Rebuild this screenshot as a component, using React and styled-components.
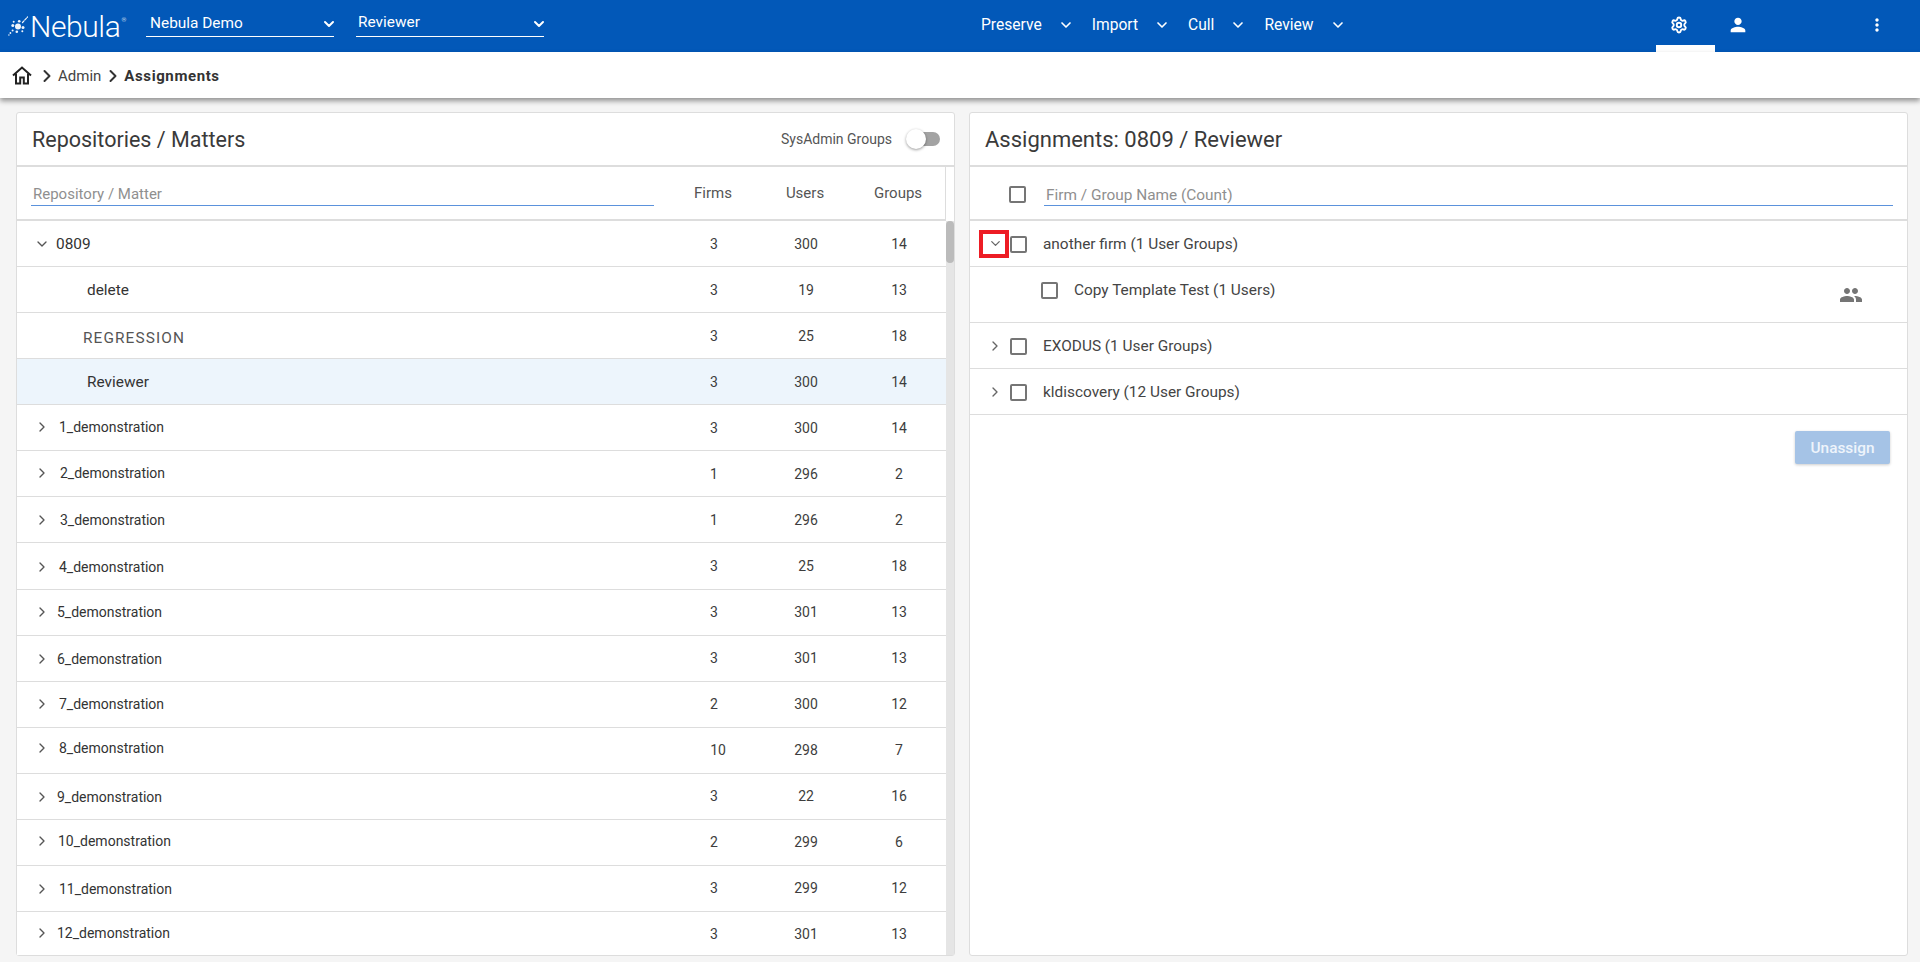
import React from 'react';
import styled, { createGlobalStyle } from 'styled-components';
import { FiChevronDown, FiChevronRight } from 'react-icons/fi';
import { MdPerson, MdPeople, MdMoreVert } from 'react-icons/md';
import { Settings } from 'lucide-react';

const GlobalStyle = createGlobalStyle`
html, body {
  margin: 0;
  padding: 0;
  height: 100%;
  background: #f5f5f5;
  overflow: hidden;
  font-family: Roboto, "Liberation Sans", sans-serif;
}
* { box-sizing: border-box; }
`

const Page = styled.div`
height: 962px;
display: flex;
flex-direction: column;
`

const TopBar = styled.header`
height: 52px;
flex: none;
background: #0258b8;
color: #fff;
display: flex;
align-items: center;
font-size: 15.4px;
padding-left: 8px;
`

const Logo = styled.div`
width: 138px;
flex: none;
display: flex;
align-items: center;
font-size: 30px;
font-weight: 300;
letter-spacing: -0.4px;
svg { margin-right: 2px; flex: none; }
sup { font-size: 6px; margin: -14px 0 0 1px; }
`

const Select = styled.div`
width: 188px;
flex: none;
margin-right: 22px;
align-self: flex-start;
margin-top: 10px;
height: 27px;
border-bottom: 1px solid #fff;
display: flex;
align-items: center;
justify-content: space-between;
padding: 0 0 ${p => p.lift}px ${p => p.inset}px;
svg { flex: none; margin: ${p => p.lift + 2}px -3px 0 0; }
`

const Nav = styled.nav`
display: flex;
flex: none;
margin-left: 415px;
padding-bottom: 2px;
font-size: 15.6px;
`

const NavItem = styled.div`
display: flex;
align-items: center;
gap: 16px;
margin-right: 18px;
`

const TabIcon = styled.div`
width: 59px;
height: 52px;
flex: none;
display: flex;
align-items: center;
justify-content: center;
margin-left: ${p => p.offset || 0}px;
border-bottom: 7px solid ${p => (p.active ? '#fff' : 'transparent')};
padding: 5px 12px 0 0;
`

const Crumbs = styled.div`
height: 46px;
flex: none;
background: #fff;
box-shadow: 0 3px 5px rgba(0, 0, 0, 0.4);
display: flex;
align-items: center;
padding: 2px 0 0 12px;
font-size: 15px;
color: #444;
position: relative;
`

const HomeIcon = styled.svg`
width: 20px;
height: 20px;
margin: -2px 3px 0 0;
`

const CrumbSep = styled.span`
display: flex;
margin: 0 1px 0 2px;
color: #333;
`

const Current = styled.b`
font-weight: 700;
letter-spacing: 0.6px;
color: #333;
`

const Main = styled.main`
flex: 1;
display: flex;
gap: 14px;
padding: 14px 12px 6px 16px;
min-height: 0;
`

const Panel = styled.section`
flex: 1;
min-width: 0;
background: #fff;
border: 1px solid #ddd;
border-radius: 3px;
display: flex;
flex-direction: column;
`

const PanelHead = styled.div`
height: 54px;
flex: none;
border-bottom: 2px solid #ddd;
display: flex;
align-items: center;
justify-content: space-between;
padding: 0 14px 0 15px;
`

const Title = styled.h2`
margin: 0;
font-size: ${p => p.size}px;
font-weight: 400;
color: #3a3a3a;
`

const ToggleWrap = styled.div`
display: flex;
align-items: center;
gap: 16px;
font-size: 14px;
color: #555;
`

const Track = styled.div`
width: 32px;
height: 14px;
border-radius: 7px;
background: #a3a3a3;
position: relative;
`

const Knob = styled.div`
position: absolute;
left: -2px;
top: -3px;
width: 20px;
height: 20px;
border-radius: 50%;
background: #fff;
box-shadow: 0 1px 3px rgba(0, 0, 0, 0.4);
`

const Columns = styled.div`
display: grid;
grid-template-columns: 1fr 92px 92px 94px;
align-items: center;
`

const FilterRow = styled(Columns)`
height: 54px;
flex: none;
border-bottom: 2px solid #ddd;
margin-right: 8px;
border-right: 1px solid #ddd;
font-size: 15px;
color: #555;
text-align: center;
`

const FilterInput = styled.div`
flex: 1;
height: 26px;
margin: 0 ${p => p.side}px 0 ${p => (p.side ? 14 : 0)}px;
padding: ${p => p.top}px 2px 0;
border-bottom: 1px solid #5b92dc;
font-size: ${p => p.size}px;
line-height: 17px;
color: #8f8f8f;
text-align: left;
`

const ListArea = styled.div`
flex: 1;
display: flex;
min-height: 0;
overflow: hidden;
`

const List = styled.div`
flex: 1;
min-width: 0;
`

const Row = styled(Columns)`
height: 46.07px;
border-bottom: 1px solid #ddd;
font-size: 14px;
color: #3d3d3d;
text-align: center;
background: ${p => (p.selected ? '#edf5fc' : '#fff')};
`

const Num = styled.div`
padding-left: ${p => p.nudge || 0}px;
`

const NameCell = styled.div`
display: flex;
align-items: center;
text-align: left;
font-size: ${p => (p.big ? '15.4px' : '14px')};
color: #333;
padding-left: 17px;
margin-top: ${p => (p.y || 0) * 2}px;
svg { color: #555; flex: none; }
`

const Name = styled.span`
margin-left: ${p => p.x}px;
letter-spacing: ${p => p.tracking || 0}px;
color: ${p => (p.tracking ? '#555' : 'inherit')};
`

const Scrollbar = styled.div`
width: 8px;
flex: none;
background: #e5e5e5;
`

const Thumb = styled.div`
height: 42px;
border-radius: 4px;
background: #bbb;
`

const AssignFilter = styled.div`
height: 54px;
flex: none;
border-bottom: 2px solid #ddd;
display: flex;
align-items: center;
padding: 0 14px 0 39px;
gap: 18px;
`

const Check = styled.div`
width: 17px;
height: 17px;
flex: none;
margin-top: 2px;
border: 2px solid #757575;
border-radius: 2px;
background: #fff;
`

const FirmRow = styled.div`
height: ${p => p.h}px;
border-bottom: 1px solid #ddd;
display: flex;
align-items: center;
padding: 0 0 ${p => (p.sub ? 10 : 0)}px ${p => (p.sub ? 71 : 9)}px;
font-size: 15.4px;
line-height: 18px;
color: #444;
`

const Toggler = styled.div`
width: 30px;
height: 28px;
flex: none;
display: flex;
align-items: center;
justify-content: center;
color: #666;
margin-right: 1px;
padding-left: 2px;
border: ${p => (p.marked ? '4px solid #ed1c24' : '0')};
`

const FirmName = styled.span`
margin-left: 16px;
`

const GroupIcon = styled.div`
margin-left: auto;
margin-right: 44px;
margin-top: 10px;
color: #757575;
display: flex;
`

const Actions = styled.div`
display: flex;
justify-content: flex-end;
padding: 16px 17px;
`

const Button = styled.button`
width: 95px;
height: 33px;
border: 0;
border-radius: 2px;
background: #a5c3e6;
color: #eef4fb;
font: 500 15.4px Roboto, sans-serif;
box-shadow: 0 1px 3px rgba(0, 0, 0, 0.2);
`

const Burst = () => (
    <svg width="20" height="20" viewBox="0 0 20 20" fill="#f0f5fb" stroke="#f0f5fb" strokeLinecap="round">
        <circle cx="10" cy="10.5" r="3" stroke="none" />
        <circle cx="4.8" cy="9.5" r="1.5" stroke="none" />
        <circle cx="15" cy="11.5" r="1.5" stroke="none" />
        <circle cx="11.2" cy="5.3" r="1.3" stroke="none" />
        <circle cx="8.8" cy="15.7" r="1.3" stroke="none" />
        <circle cx="5.7" cy="5.8" r="1" stroke="none" />
        <circle cx="14.3" cy="15.2" r="1" stroke="none" />
        <circle cx="4.6" cy="14.4" r="1" stroke="none" />
        <circle cx="2.4" cy="17" r=".9" stroke="none" />
        <circle cx=".9" cy="19" r=".7" stroke="none" />
        <path d="M14.5 6.5L19.5 1" strokeWidth="1.2" strokeDasharray="2.2 1.3" fill="none" />
    </svg>
);

const Home = () => (
    <HomeIcon viewBox="0 0 20 20" fill="none" stroke="#222" strokeWidth="2">
        <path d="M1 10.5L10 2.5l9 8" />
        <path d="M4 8.5V18.5h4.2V12.5h3.6V18.5H16V8.5" />
    </HomeIcon>
);

const matters = [
    { name: '1_demonstration', x: 9, y: -1, f: 3, u: 300, g: 14 },
    { name: '2_demonstration', x: 10, y: -1, f: 1, u: 296, g: 2 },
    { name: '3_demonstration', x: 10, y: 0, f: 1, u: 296, g: 2 },
    { name: '4_demonstration', x: 9, y: 1, f: 3, u: 25, g: 18 },
    { name: '5_demonstration', x: 7, y: 0, f: 3, u: 301, g: 13 },
    { name: '6_demonstration', x: 7, y: 1, f: 3, u: 301, g: 13 },
    { name: '7_demonstration', x: 9, y: 0, f: 2, u: 300, g: 12 },
    { name: '8_demonstration', x: 9, y: -2, f: 10, u: 298, g: 7, nudge: 8 },
    { name: '9_demonstration', x: 7, y: 1, f: 3, u: 22, g: 16 },
    { name: '10_demonstration', x: 8, y: -1, f: 2, u: 299, g: 6 },
    { name: '11_demonstration', x: 9, y: 1, f: 3, u: 299, g: 12 },
    { name: '12_demonstration', x: 7, y: -1, f: 3, u: 301, g: 13 },
];

const App = () => (
    <Page>
        <GlobalStyle />
        <TopBar>
            <Logo><Burst />Nebula<sup>®</sup></Logo>
            <Select inset={4} lift={0}>Nebula Demo <FiChevronDown size={16} strokeWidth={3} /></Select>
            <Select inset={2} lift={2}>Reviewer <FiChevronDown size={16} strokeWidth={3} /></Select>
            <Nav>
                {['Preserve', 'Import', 'Cull', 'Review'].map(item => (
                    <NavItem key={item}>{item}<FiChevronDown size={16} strokeWidth={2.5} /></NavItem>
                ))}
            </Nav>
            <TabIcon active offset={292}><Settings size={18} strokeWidth={2.5} /></TabIcon>
            <TabIcon><MdPerson size={22} /></TabIcon>
            <TabIcon offset={80}><MdMoreVert size={20} /></TabIcon>
        </TopBar>
        <Crumbs>
            <Home />
            <CrumbSep><FiChevronRight size={20} strokeWidth={2.4} /></CrumbSep>
            Admin
            <CrumbSep><FiChevronRight size={20} strokeWidth={2.4} /></CrumbSep>
            <Current>Assignments</Current>
        </Crumbs>
        <Main>
            <Panel>
                <PanelHead>
                    <Title size={21.5}>Repositories / Matters</Title>
                    <ToggleWrap>SysAdmin Groups<Track><Knob /></Track></ToggleWrap>
                </PanelHead>
                <FilterRow>
                    <FilterInput side={13} top={6} size={15}>Repository / Matter</FilterInput>
                    <div>Firms</div>
                    <div>Users</div>
                    <div>Groups</div>
                </FilterRow>
                <ListArea>
                    <List>
                        <Row>
                            <NameCell big><FiChevronDown size={16} /><Name x={6}>0809</Name></NameCell>
                            <div>3</div><div>300</div><div>14</div>
                        </Row>
                        <Row>
                            <NameCell big><Name x={53}>delete</Name></NameCell>
                            <div>3</div><div>19</div><div>13</div>
                        </Row>
                        <Row>
                            <NameCell big y={2}><Name x={49} tracking={1.1}>REGRESSION</Name></NameCell>
                            <div>3</div><div>25</div><div>18</div>
                        </Row>
                        <Row selected>
                            <NameCell big><Name x={53}>Reviewer</Name></NameCell>
                            <div>3</div><div>300</div><div>14</div>
                        </Row>
                        {matters.map(m => (
                            <Row key={m.name}>
                                <NameCell y={m.y}><FiChevronRight size={16} /><Name x={m.x}>{m.name}</Name></NameCell>
                                <Num nudge={m.nudge}>{m.f}</Num><div>{m.u}</div><div>{m.g}</div>
                            </Row>
                        ))}
                    </List>
                    <Scrollbar><Thumb /></Scrollbar>
                </ListArea>
            </Panel>
            <Panel>
                <PanelHead><Title size={22}>Assignments: 0809 / Reviewer</Title></PanelHead>
                <AssignFilter>
                    <Check />
                    <FilterInput side={0} top={7} size={15.4}>Firm / Group Name (Count)</FilterInput>
                </AssignFilter>
                <FirmRow h={46}>
                    <Toggler marked><FiChevronDown size={15} /></Toggler>
                    <Check /><FirmName>another firm (1 User Groups)</FirmName>
                </FirmRow>
                <FirmRow h={56} sub>
                    <Check /><FirmName>Copy Template Test (1 Users)</FirmName>
                    <GroupIcon><MdPeople size={24} /></GroupIcon>
                </FirmRow>
                <FirmRow h={46}>
                    <Toggler><FiChevronRight size={16} /></Toggler>
                    <Check /><FirmName>EXODUS (1 User Groups)</FirmName>
                </FirmRow>
                <FirmRow h={46}>
                    <Toggler><FiChevronRight size={16} /></Toggler>
                    <Check /><FirmName>kldiscovery (12 User Groups)</FirmName>
                </FirmRow>
                <Actions><Button>Unassign</Button></Actions>
            </Panel>
        </Main>
    </Page>
);

export default App;
